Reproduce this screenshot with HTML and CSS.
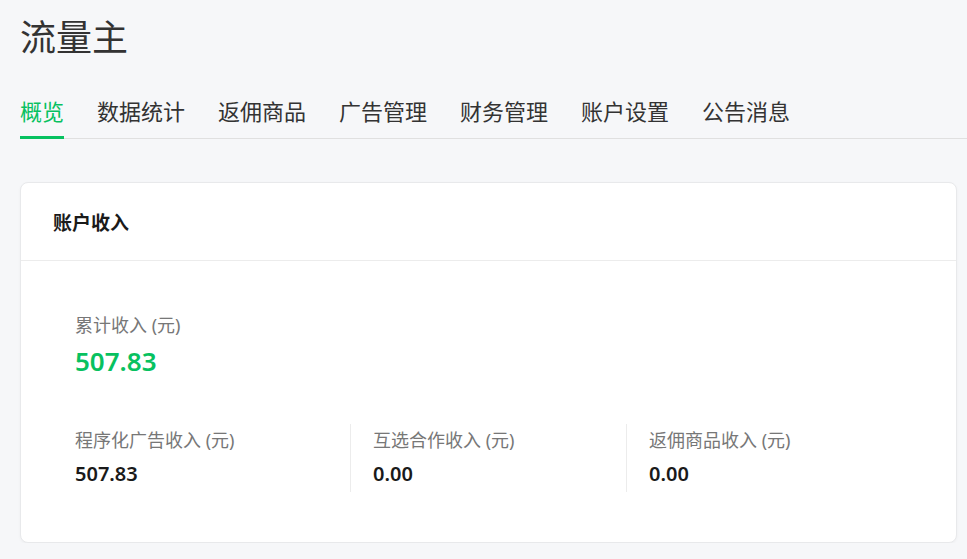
FILE: index.html
```html
<!DOCTYPE html>
<html lang="zh-CN">

<head>
    <meta charset="UTF-8">
    <title>流量主</title>
    <link rel="stylesheet" href="styles.css">
</head>

<body>
    <div class="page">
        <h1 class="title">流量主</h1>
        <ul class="tabs">
            <li class="active">概览</li>
            <li>数据统计</li>
            <li>返佣商品</li>
            <li>广告管理</li>
            <li>财务管理</li>
            <li>账户设置</li>
            <li>公告消息</li>
        </ul>

        <div class="card">
            <div class="card-hd">账户收入</div>
            <div class="card-bd">
                <div class="total">
                    <div class="label">累计收入 (元)</div>
                    <div class="total-num">507.83</div>
                </div>
                <div class="items">
                    <div class="item">
                        <div class="label">程序化广告收入 (元)</div>
                        <div class="num">507.83</div>
                    </div>
                    <div class="item">
                        <div class="label">互选合作收入 (元)</div>
                        <div class="num">0.00</div>
                    </div>
                    <div class="item">
                        <div class="label">返佣商品收入 (元)</div>
                        <div class="num">0.00</div>
                    </div>
                </div>
            </div>
        </div>
    </div>
</body>

</html>
```

FILE: styles.css
```css
* {
    padding: 0;
    margin: 0;
    box-sizing: border-box;
}

body {
    background: #f6f7f9;
    font-family: "Noto Sans", "Noto Sans CJK SC", sans-serif;
    color: #333;
}

.page {
    padding: 16px 10px 0 20px;
}

.title {
    font-size: 36px;
    font-weight: 400;
    line-height: 44px;
    color: #333;
}

.tabs {
    list-style: none;
    display: flex;
    gap: 33px;
    margin-top: 36px;
    margin-right: -10px;
    border-bottom: 1px solid #e0e0e0;
}

.tabs li {
    font-size: 22px;
    line-height: 30px;
    padding-bottom: 12px;
    color: #333;
    cursor: pointer;
}

.tabs .active {
    color: #07c160;
    border-bottom: 3px solid #07c160;
    padding-bottom: 10px;
    margin-bottom: -1px;
}

.card {
    margin-top: 43px;
    background: #fff;
    border: 1px solid #e8e9eb;
    border-radius: 8px;
    box-shadow: 0 1px 3px rgba(0, 0, 0, 0.04);
}

.card-hd {
    height: 78px;
    padding: 0 32px;
    display: flex;
    align-items: center;
    font-size: 19px;
    font-weight: 700;
    color: #1a1a1a;
    border-bottom: 1px solid #ececec;
}

.card-bd {
    padding: 52px 32px 50px 54px;
}

.label {
    font-size: 18px;
    line-height: 24px;
    color: #777;
}

.total-num {
    font-size: 26px;
    font-weight: 600;
    line-height: 36px;
    margin-top: 6px;
    color: #07c160;
}

.items {
    display: grid;
    grid-template-columns: 275px 276px 1fr;
    margin-top: 45px;
}

.item {
    padding: 4px 0 4px 22px;
    border-left: 1px solid #ececec;
}

.item:first-child {
    padding-left: 0;
    border-left: none;
}

.num {
    font-size: 20px;
    font-weight: 600;
    line-height: 28px;
    margin-top: 8px;
    color: #1a1a1a;
}
```
